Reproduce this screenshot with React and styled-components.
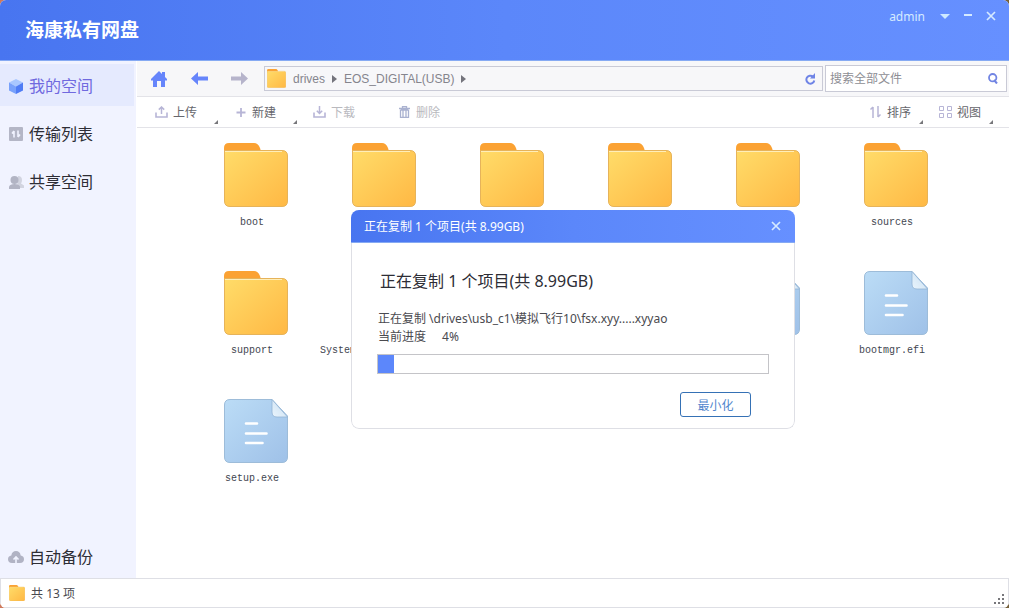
import React, { useState } from 'react';
import styled, { createGlobalStyle, css } from 'styled-components';

const files = [
  { id: 1, name: 'boot', type: 'folder' },
  { id: 2, type: 'folder' },
  { id: 3, type: 'folder' },
  { id: 4, type: 'folder' },
  { id: 5, type: 'folder' },
  { id: 6, name: 'sources', type: 'folder' },
  { id: 7, name: 'support', type: 'folder' },
  { id: 8, name: 'System Volume Information', type: 'folder' },
  { id: 9, type: 'file' },
  { id: 10, type: 'file' },
  { id: 11, type: 'file' },
  { id: 12, name: 'bootmgr.efi', type: 'file' },
  { id: 13, name: 'setup.exe', type: 'file' },
];

const FolderIcon = ({ size }) => (
  <svg width={size} height={size} viewBox="0 0 64 64" aria-hidden="true">
    <defs>
      <linearGradient id="folderFront" x1="0" y1="0" x2="1" y2="1">
        <stop offset="0" stopColor="#ffdc69" />
        <stop offset="1" stopColor="#ffb844" />
      </linearGradient>
    </defs>
    <path d="M0 12V5Q0 0 5 0H30Q34 0 36 5L38 12Z" fill="#fba233" />
    <path d="M.5 7.500H58Q63.500 7.500 63.500 13V58Q63.500 63.500 58 63.500H6Q.5 63.500.5 58Z" fill="url(#folderFront)" stroke="#e6b35a" />
    <path d="M1 8.500H58" stroke="#ffeeb8" />
  </svg>
);

const FileIcon = () => (
  <svg width="64" height="64" viewBox="0 0 64 64" aria-hidden="true">
    <defs>
      <linearGradient id="filePage" x1="0" y1="0" x2="1" y2="1">
        <stop offset="0" stopColor="#bbdcf6" />
        <stop offset="1" stopColor="#9fc1e8" />
      </linearGradient>
      <linearGradient id="fileFold" x1="0" y1="1" x2="1" y2="0">
        <stop offset="0" stopColor="#e9f4fc" />
        <stop offset="1" stopColor="#c8def1" />
      </linearGradient>
    </defs>
    <path d="M6 .5H48L63.500 17V58Q63.500 63.500 58 63.500H6Q.5 63.500.5 58V6Q.5.5 6 .5Z" fill="url(#filePage)" stroke="#9dbcd9" />
    <path d="M48 .5V13Q48 18 53 18H63.500Z" fill="url(#fileFold)" stroke="#93b4d4" strokeWidth=".8" />
    <path d="M22 24.500H33M22 34.500H42.500M22 44H38.500" stroke="#fff" strokeWidth="2.600" strokeLinecap="round" />
  </svg>
);

const CubeIcon = () => (
  <svg width="14" height="15" viewBox="0 0 14 15" aria-hidden="true">
    <path d="M7 0L14 3.500 7 7.500 0 3.500Z" fill="#a9c7ff" />
    <path d="M0 3.500L7 7.500V15L0 11.500Z" fill="#78a1fb" />
    <path d="M14 3.500L7 7.500V15L14 11.500Z" fill="#4f7cf5" />
  </svg>
);

const TransferIcon = () => (
  <svg width="14" height="14" viewBox="0 0 14 14" aria-hidden="true">
    <rect width="14" height="14" rx="1" fill="#b4b6c6" />
    <path d="M5 10.500V4M5 4L3 6.500M9 3.500V10M9 10L11 7.500" stroke="#f1f3ff" strokeWidth="1.600" fill="none" />
  </svg>
);

const PeopleIcon = () => (
  <svg width="15" height="13" viewBox="0 0 15 13" aria-hidden="true">
    <path d="M9 0Q13 0 13 4 13 6 12 7.500L15 9.500V12H8Z" fill="#d2d4e0" />
    <circle cx="5.500" cy="4" r="4" fill="#b2b4c4" />
    <path d="M0 13V10.500Q1 8 5.500 8T11 10.500V13Z" fill="#b2b4c4" />
  </svg>
);

const CloudIcon = () => (
  <svg width="16" height="12" viewBox="0 0 16 12" aria-hidden="true">
    <path d="M4 12Q0 12 0 8.300 0 5 3.300 4.600 4 0 8 0T12.700 4.600Q16 5 16 8.300 16 12 12 12Z" fill="#b1b3c4" />
    <path d="M8 12V6.500M5.500 8.500L8 6 10.500 8.500" stroke="#f1f3ff" strokeWidth="1.600" fill="none" />
  </svg>
);

const HomeIcon = () => (
  <svg width="16" height="16" viewBox="0 0 16 16" aria-hidden="true">
    <path d="M8 0L11 3V1H14V6L16 8V9.500H14V16H10V10H6V16H2V9.500H0V8Z" fill="#6685fb" />
  </svg>
);

const ArrowIcon = ({ flip }) => (
  <svg width="17" height="13" viewBox="0 0 17 13" aria-hidden="true">
    <path
      d={flip ? 'M17 6.500L10 0V4.500H0V8.500H10V13Z' : 'M0 6.500L7 0V4.500H17V8.500H7V13Z'}
      fill={flip ? '#b6b4cb' : '#6685fb'}
    />
  </svg>
);

const RefreshIcon = () => (
  <svg width="11" height="12" viewBox="0 0 11 12" aria-hidden="true">
    <path d="M8 3.600A4 4 0 1 0 9.300 7.500" stroke="#6f84e6" strokeWidth="2" fill="none" />
    <path d="M10 0V5.500H5Z" fill="#6f84e6" />
  </svg>
);

const SearchIcon = () => (
  <svg width="10" height="11" viewBox="0 0 10 11" aria-hidden="true">
    <circle cx="4.700" cy="4.700" r="3.700" stroke="#7285e3" strokeWidth="1.800" fill="none" />
    <path d="M6 7L9 10.500" stroke="#7285e3" strokeWidth="2" />
  </svg>
);

const TrayIcon = ({ down }) => (
  <svg width="13" height="12" viewBox="0 0 13 12" aria-hidden="true">
    <path d="M1 6.500V11H12V6.500" stroke="#b7b5d6" strokeWidth="1.600" fill="none" />
    <path d={down ? 'M6.500 0V7M3.800 4.800L6.500 7.500 9.200 4.800' : 'M6.500 8V1M3.800 3.600L6.500 1 9.200 3.600'} stroke="#b7b5d6" strokeWidth="1.500" fill="none" />
  </svg>
);

const PlusIcon = () => (
  <svg width="13" height="12" viewBox="0 0 13 12" aria-hidden="true">
    <path d="M7 2V11M2.500 6.500H11.500" stroke="#b7b5d6" strokeWidth="1.800" />
  </svg>
);

const TrashIcon = () => (
  <svg width="13" height="12" viewBox="0 0 13 12" aria-hidden="true">
    <path d="M1 2.500H12M4.500 2V.7H8.500V2M2.500 4V11.300H10.500V4M5 4V11M8 4V11M2.500 4H10.500" stroke="#aab2d0" strokeWidth="1.300" fill="none" />
  </svg>
);

const SortIcon = () => (
  <svg width="13" height="12" viewBox="0 0 13 12" aria-hidden="true">
    <path d="M4 12V1M1.500 3.500L4 1M9 0V11M11.500 8.500L9 11" stroke="#b7b5d6" strokeWidth="1.500" fill="none" />
  </svg>
);

const GridIcon = () => (
  <svg width="13" height="12" viewBox="0 0 13 12" aria-hidden="true">
    <path d="M.5.5H4.500V4.500H.5ZM8.500.5H12.500V4.500H8.500ZM.5 7.500H4.500V11.500H.5ZM8.500 7.500H12.500V11.500H8.500Z" stroke="#b7b5d6" fill="none" />
  </svg>
);

const CloseIcon = () => (
  <svg width="10" height="10" viewBox="0 0 10 10" aria-hidden="true">
    <path d="M1 1L9 9M9 1L1 9" stroke="#d5eaff" strokeWidth="1.700" />
  </svg>
);

const CrumbArrow = () => (
  <svg width="5" height="8" viewBox="0 0 5 8" aria-hidden="true">
    <path d="M0 0L5 4 0 8Z" fill="#74747c" />
  </svg>
);

const Tool = ({ icon, label, menu, compact, disabled }) => (
  <ToolButton type="button" disabled={disabled} $compact={compact}>
    {icon}
    {label}
    {menu && <MenuMark />}
  </ToolButton>
);

const CopyDialog = ({ onClose }) => {
  const percent = 4;

  return (
    <Overlay>
      <Dialog role="dialog" aria-labelledby="copy-title">
        <DialogBar>
          <span id="copy-title">正在复制 1 个项目(共 8.99GB)</span>
          <IconButton type="button" aria-label="关闭" onClick={onClose}><CloseIcon /></IconButton>
        </DialogBar>
        <DialogBody>
          <DialogHeading>正在复制 1 个项目(共 8.99GB)</DialogHeading>
          <DialogText>正在复制 \drives\usb_c1\模拟飞行10\fsx.xyy.....xyyao</DialogText>
          <DialogText>当前进度<Percent>{percent}%</Percent></DialogText>
          <Track role="progressbar" aria-label="当前进度" aria-valuenow={percent}>
            <Fill style={{ width: `${percent}%` }} />
          </Track>
          <MinimizeButton type="button" onClick={onClose}>最小化</MinimizeButton>
        </DialogBody>
      </Dialog>
    </Overlay>
  );
};

export default function App() {
  const [copying, setCopying] = useState(true);

  return (
    <>
      <GlobalStyle />
      <Window>
        <Header>
          <Title>海康私有网盘</Title>
          <WindowControls>
            <UserButton type="button">
              admin
              <svg width="10" height="5" viewBox="0 0 10 5" aria-hidden="true"><path d="M0 0H10L5 5Z" fill="#cde9ff" /></svg>
            </UserButton>
            <IconButton type="button" aria-label="最小化窗口">
              <svg width="8" height="10" viewBox="0 0 8 10" aria-hidden="true"><path d="M0 4H8" stroke="#d5eaff" strokeWidth="2" /></svg>
            </IconButton>
            <IconButton type="button" aria-label="关闭窗口"><CloseIcon /></IconButton>
          </WindowControls>
        </Header>

        <Content>
          <Sidebar>
            <NavItem href="#space" $active><NavIcon><CubeIcon /></NavIcon>我的空间</NavItem>
            <NavItem href="#transfer"><NavIcon><TransferIcon /></NavIcon>传输列表</NavItem>
            <NavItem href="#share"><NavIcon><PeopleIcon /></NavIcon>共享空间</NavItem>
            <NavItem href="#backup" $bottom><NavIcon><CloudIcon /></NavIcon>自动备份</NavItem>
          </Sidebar>

          <Main>
            <LocationBar>
              <LocationButton type="button" aria-label="主页"><HomeIcon /></LocationButton>
              <LocationButton type="button" aria-label="后退"><ArrowIcon /></LocationButton>
              <LocationButton type="button" aria-label="前进"><ArrowIcon flip /></LocationButton>
              <Address>
                <FolderIcon size={19} />
                <Crumb href="#drives">drives</Crumb>
                <CrumbArrow />
                <Crumb href="#usb">EOS_DIGITAL(USB)</Crumb>
                <CrumbArrow />
                <RefreshButton type="button" aria-label="刷新"><RefreshIcon /></RefreshButton>
              </Address>
              <SearchBox>
                <SearchInput type="text" aria-label="搜索全部文件" placeholder="搜索全部文件" />
                <SearchIcon />
              </SearchBox>
            </LocationBar>

            <Toolbar>
              <Tool icon={<TrayIcon />} label="上传" menu />
              <Tool icon={<PlusIcon />} label="新建" menu />
              <Tool icon={<TrayIcon down />} label="下载" disabled />
              <Tool icon={<TrashIcon />} label="删除" disabled />
              <Spacer />
              <Tool icon={<SortIcon />} label="排序" menu compact />
              <Tool icon={<GridIcon />} label="视图" menu compact />
            </Toolbar>

            <FileGrid>
              {files.map(file => (
                <FileTile key={file.id}>
                  {file.type === 'folder' ? <FolderIcon size={64} /> : <FileIcon />}
                  {file.name && <FileName>{file.name}</FileName>}
                </FileTile>
              ))}
            </FileGrid>

            {copying && <CopyDialog onClose={() => setCopying(false)} />}
          </Main>
        </Content>

        <StatusBar>
          <FolderIcon size={16} />
          <span>共 {files.length} 项</span>
          <Grip width="11" height="11" viewBox="0 0 11 11" aria-hidden="true">
            <path d="M8 0H10V2H8ZM4 4H6V6H4ZM8 4H10V6H8ZM0 8H2V10H0ZM4 8H6V10H4ZM8 8H10V10H8Z" fill="#77777b" />
          </Grip>
        </StatusBar>
      </Window>
    </>
  );
}

const GlobalStyle = createGlobalStyle`
  * {
    box-sizing: border-box;
  }

  body {
    margin: 0;
    background: linear-gradient(90deg, #cf7a5c, #75603a);
    font-family: "Noto Sans", "Noto Sans CJK SC", sans-serif;
    font-size: 12px;
    color: #4a4a4f;
  }

  button, input {
    font: inherit;
    color: inherit;
    padding: 0;
    border: 0;
    background: none;
  }

  svg {
    flex: none;
    display: block;
  }
`;

const Window = styled.div`
  display: flex;
  flex-direction: column;
  height: 100vh;
  overflow: hidden;
  border-radius: 6px;
  background: #fff;
`;

const Header = styled.header`
  flex: none;
  display: flex;
  justify-content: space-between;
  height: 61px;
  padding: 0 13px 0 25px;
  border-bottom: 1px solid #86aaf3;
  background: linear-gradient(90deg, #4875f0, #5b87fa 50%, #6690ff);
  color: #fff;
`;

const Title = styled.h1`
  margin: 0;
  font-size: 19px;
  line-height: 60px;
  font-weight: 700;
`;

const WindowControls = styled.div`
  display: flex;
  align-items: center;
  gap: 14px;
  height: 32px;
`;

const IconButton = styled.button`
  display: flex;
  align-items: center;
`;

const UserButton = styled.button`
  display: flex;
  align-items: center;
  gap: 15px;
  color: #d5eaff;
`;

const Content = styled.div`
  flex: 1;
  display: flex;
  gap: 1px;
  min-height: 0;
`;

const Sidebar = styled.nav`
  flex: none;
  display: flex;
  flex-direction: column;
  gap: 6px;
  width: 136px;
  padding: 3px 2px 1px 0;
  background: #f1f3ff;
`;

const NavItem = styled.a`
  display: flex;
  align-items: center;
  gap: 5px;
  height: 42px;
  padding-left: 8px;
  font-size: 16px;
  text-decoration: none;
  color: ${props => (props.$active ? '#7069df' : '#2d2d35')};
  background: ${props => (props.$active ? '#e5eafe' : 'transparent')};
  ${props => props.$bottom && css`
    margin-top: auto;
  `}
`;

const NavIcon = styled.span`
  display: flex;
  justify-content: center;
  width: 16px;
  padding-top: 2px;
`;

const Main = styled.main`
  position: relative;
  flex: 1;
  display: flex;
  flex-direction: column;
  min-width: 0;
`;

const LocationBar = styled.div`
  flex: none;
  display: flex;
  align-items: center;
  height: 36px;
  padding: 0 2px;
  border-bottom: 1px solid #e3e3e8;
  background: #f7f7f9;
`;

const LocationButton = styled.button`
  display: flex;
  align-items: center;
  justify-content: center;
  width: 40px;
  height: 32px;
`;

const Address = styled.div`
  flex: 1;
  display: flex;
  align-items: center;
  gap: 7px;
  height: 25px;
  margin: 0 2px 0 5px;
  padding: 0 6px 0 2px;
  border: 1px solid #c9cad6;
  font-family: "Liberation Sans", sans-serif;
`;

const Crumb = styled.a`
  color: #85858d;
  text-decoration: none;
`;

const RefreshButton = styled.button`
  margin-left: auto;
`;

const SearchBox = styled.div`
  flex: none;
  display: flex;
  align-items: center;
  width: 182px;
  height: 27px;
  padding: 0 8px 0 4px;
  border: 1px solid #c9cad6;
  background: #fff;
`;

const SearchInput = styled.input`
  flex: 1;
  min-width: 0;
  outline: none;

  &::placeholder {
    color: #8e8e94;
    opacity: 1;
  }
`;

const Toolbar = styled.div`
  flex: none;
  display: flex;
  align-items: center;
  gap: 16px;
  height: 31px;
  padding: 0 16px 0 18px;
  border-bottom: 1px solid #e3e3e8;
`;

const ToolButton = styled.button`
  display: flex;
  align-items: center;
  gap: 5px;
  width: ${props => (props.$compact ? '54px' : '63px')};
  height: 26px;
  color: #66666c;

  &:disabled {
    width: 69px;
    color: #b9b9be;
  }
`;

const MenuMark = styled.span`
  align-self: flex-end;
  margin-left: auto;
  margin-bottom: 1px;
  border-left: 4px solid transparent;
  border-bottom: 4px solid #77777b;
`;

const Spacer = styled.div`
  flex: 1;
`;

const FileGrid = styled.ul`
  flex: 1;
  display: grid;
  grid-template-columns: repeat(auto-fill, 128px);
  grid-auto-rows: 128px;
  min-height: 0;
  margin: 0;
  padding: 15px 0 0 55px;
  overflow: hidden;
  list-style: none;
`;

const FileTile = styled.li`
  display: flex;
  flex-direction: column;
  align-items: center;
  gap: 8px;
`;

const FileName = styled.span`
  width: 100%;
  padding-right: 8px;
  overflow: hidden;
  text-align: center;
  text-overflow: ellipsis;
  white-space: nowrap;
  font-family: "Liberation Mono", monospace;
  font-size: 10px;
  line-height: 16px;
  color: #3f4650;
`;

const Overlay = styled.div`
  position: absolute;
  inset: 0;
  display: flex;
  align-items: center;
  justify-content: center;
`;

const Dialog = styled.section`
  width: 444px;
  overflow: hidden;
  border-radius: 8px;
  background: #fff;
`;

const DialogBar = styled.header`
  display: flex;
  align-items: center;
  justify-content: space-between;
  height: 33px;
  padding: 0 14px 0 13px;
  border-bottom: 1px solid #86aaf3;
  background: linear-gradient(90deg, #4875f0, #5b87fa 50%, #6690ff);
  color: #fff;
`;

const DialogBody = styled.div`
  display: flex;
  flex-direction: column;
  padding: 26px 25px 11px;
  border: 1px solid #dedfe5;
  border-top: 0;
  border-radius: 0 0 8px 8px;
`;

const DialogHeading = styled.h2`
  margin: 0 0 17px 3px;
  font-size: 16px;
  line-height: 24px;
  font-weight: 400;
  color: #2d2d35;
`;

const DialogText = styled.p`
  margin: 0 0 0 1px;
  line-height: 18px;
`;

const Percent = styled.span`
  margin-left: 16px;
`;

const Track = styled.div`
  height: 20px;
  margin-top: 8px;
  border: 1px solid #c4c4c8;
`;

const Fill = styled.div`
  height: 100%;
  background: #5c87fb;
`;

const MinimizeButton = styled.button`
  align-self: flex-end;
  width: 71px;
  height: 25px;
  margin: 18px 18px 0 0;
  border: 1px solid #3571b5;
  border-radius: 3px;
  color: #5186cd;
`;

const StatusBar = styled.footer`
  flex: none;
  display: flex;
  align-items: center;
  gap: 6px;
  height: 30px;
  padding: 0 3px 0 8px;
  border: 1px solid #dedfe5;
`;

const Grip = styled.svg`
  align-self: flex-end;
  margin-left: auto;
  margin-bottom: 2px;
`;
